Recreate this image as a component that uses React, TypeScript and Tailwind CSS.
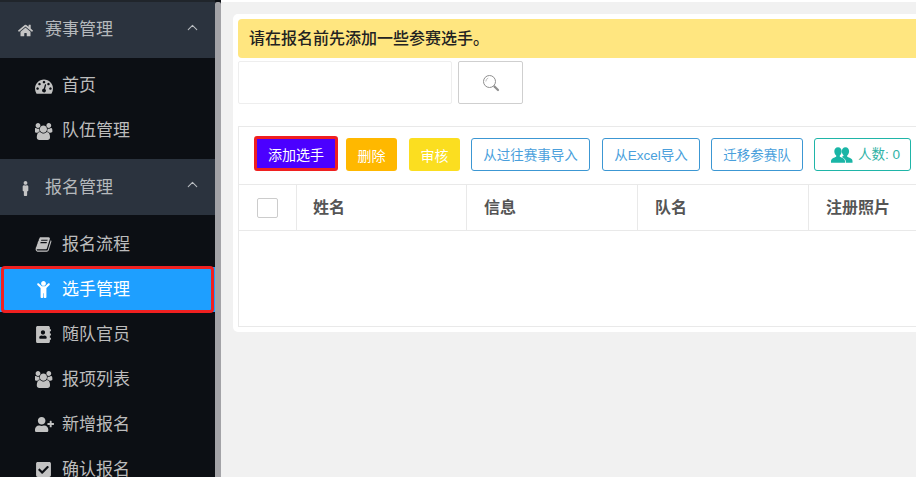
import React from "react";
import { FaHome, FaMale, FaAddressBook, FaUserPlus, FaCheckSquare, FaChild } from "react-icons/fa";
import { LuChevronUp } from "react-icons/lu";

const font = { fontFamily: '"Liberation Sans", "Noto Sans CJK SC", sans-serif' };

const UsersIcon = () => (
  <svg width="18" height="17" viewBox="0 0 1920 1792" fill="currentColor">
    <path d="M529 896q-162 5-265 128h-134q-82 0-138-40.5t-56-118.5q0-353 124-353 6 0 43.5 21t97.5 42.5 119 21.5q67 0 133-23-5 37-5 66 0 139 81 256zm1071 637q0 120-73 189.5t-194 69.5h-874q-121 0-194-69.5t-73-189.5q0-53 3.5-103.5t14-109 26.5-108.5 43-97.5 62-81 85.5-53.5 111.5-20q10 0 43 21.5t73 48 107 48 135 21.5 135-21.5 107-48 73-48 43-21.5q61 0 111.5 20t85.5 53.5 62 81 43 97.5 26.5 108.5 14 109 3.5 103.5zm-1024-1277q0 106-75 181t-181 75-181-75-75-181 75-181 181-75 181 75 75 181zm704 384q0 159-112.5 271.5t-271.5 112.5-271.5-112.5-112.5-271.5 112.5-271.5 271.5-112.5 271.5 112.5 112.5 271.5zm576 225q0 78-56 118.5t-138 40.5h-134q-103-123-265-128 81-117 81-256 0-29-5-66 66 23 133 23 59 0 119-21.5t97.5-42.5 43.5-21q124 0 124 353zm-128-609q0 106-75 181t-181 75-181-75-75-181 75-181 181-75 181 75 75 181z" />
  </svg>
);

const BookIcon = () => (
  <svg width="17" height="17" viewBox="0 0 1792 1792" fill="currentColor">
    <path d="M1703 478q40 57 18 129l-275 906q-19 64-76.500 107.500t-122.500 43.500h-923q-77 0-148.500-53.500t-99.500-131.500q-24-67-2-127 0-4 3-27t4-37q1-8-3-21.500t-3-19.500q2-11 8-21t16.500-23.500 16.500-23.500q23-38 45-91.500t30-91.500q3-10 .5-30t-.5-28q3-11 17-28t17-23q21-36 42-92t25-90q1-9-2.500-32t.5-28q4-13 22-30.500t22-22.500q19-26 42.500-84.500t27.500-96.500q1-8-3-25.500t-2-26.500q2-8 9-18t18-23 17-21q8-12 16.500-30.500t15-35 16-36 19.500-32 26.500-23.500 36-11.500 47.500 5.500l-1 3q38-9 51-9h761q74 0 114 56t18 130l-274 906q-36 119-71.500 153.500t-128.500 34.500h-869q-27 0-38 15-11 16-1 43 24 70 144 70h923q29 0 56-15.500t35-41.500l300-987q7-22 5-57 38 15 59 43zm-1064 2q-4 13 2 22.500t20 9.500h608q13 0 25.500-9.500t16.500-22.500l21-64q4-13-2-22.500t-20-9.500h-608q-13 0-25.500 9.500t-16.500 22.500zm-83 256q-4 13 2 22.500t20 9.500h608q13 0 25.500-9.500t16.500-22.500l21-64q4-13-2-22.500t-20-9.500h-608q-13 0-25.500 9.500t-16.500 22.500z" />
  </svg>
);

const GaugeIcon = () => (
  <svg width="18" height="18" viewBox="0 0 1792 1792" fill="currentColor">
    <path d="M384 1152q0-53-37.500-90.500t-90.500-37.500-90.500 37.500-37.500 90.500 37.500 90.500 90.500 37.500 90.500-37.500 37.500-90.500zm192-448q0-53-37.500-90.500t-90.500-37.500-90.500 37.500-37.500 90.500 37.500 90.500 90.500 37.500 90.500-37.500 37.500-90.500zm428 481l101-382q6-26-7.500-48.500t-38.500-29.500-48 6.500-30 39.500l-101 382q-60 5-107 43.500t-63 98.500q-20 77 20 146t117 89 146-20 89-117q16-60-6-117t-72-91zm660-33q0-53-37.500-90.500t-90.500-37.500-90.500 37.500-37.500 90.500 37.500 90.500 90.500 37.500 90.500-37.500 37.500-90.500zm-640-640q0-53-37.500-90.500t-90.500-37.500-90.500 37.500-37.500 90.500 37.500 90.500 90.500 37.500 90.500-37.500 37.500-90.500zm448 192q0-53-37.500-90.500t-90.500-37.500-90.500 37.500-37.500 90.500 37.500 90.500 90.500 37.500 90.500-37.500 37.500-90.500zm320 448q0 261-141 483-19 29-54 29h-1402q-35 0-54-29-141-221-141-483 0-182 71-348t191-286 286-191 348-71 348 71 286 191 191 286 71 348z" />
  </svg>
);

const TwoUsers = () => (
  <svg width="22" height="18" viewBox="0 0 22 18" fill="#1ab5a6">
    <path d="M14.5 1.2c2.3 0 3.6 1.8 3.6 4 0 1.800-.8 3.400-1.900 4.300v1.300c1.700.8 5.300 1.700 5.300 4.200v1.800h-6.700v-1.500c0-2-1.700-3.200-3.900-4.400.7-.3 1.100-.6 1.600-.8V9.200c-1-.9-1.700-2.400-1.700-4 0-2.200 1.400-4 3.700-4z" />
    <path d="M7 1.200c2.300 0 3.700 1.800 3.700 4 0 1.800-.8 3.400-1.900 4.300v1.300c1.800.8 5.200 1.900 5.200 4.400v1.600H0v-1.600c0-2.500 3.500-3.600 5.200-4.400V9.500C4.100 8.600 3.300 7 3.300 5.200c0-2.200 1.400-4 3.700-4z" />
  </svg>
);

function Group({ icon, label, low }: { icon: React.ReactNode; label: string; low?: boolean }) {
  return (
    <div className="h-[56px] bg-[#2b333e] flex items-center pl-[18px] pr-[14px] text-[17px]">
      <span className={`w-[27px] flex text-[#c4c4c4] text-[15px] ${low ? "pt-[2px]" : ""}`}>{icon}</span>
      <span className={`flex-1 text-[#b5b9bc] ${low ? "pt-[2px]" : ""}`}>{label}</span>
      <LuChevronUp size={17} strokeWidth={1.5} className="text-[#b8bcc0] mb-[6px]" />
    </div>
  );
}

function Item({ icon, label, active, high }: { icon: React.ReactNode; label: string; active?: boolean; high?: boolean }) {
  const shift = high ? "pb-[1px]" : "";
  return (
    <div className={`relative h-[45px] flex items-center pl-[35px] text-[17px] ${active ? "bg-[#1e9fff] text-white" : "text-[#bcbcbc]"}`}>
      <span className={`w-[27px] flex text-[17px] ${shift} ${active ? "text-white" : "text-[#c2c2c2]"}`}>{icon}</span>
      <span className={shift}>{label}</span>
      {active && <div className="absolute left-[1px] right-[1px] top-[-1px] bottom-[-1px] border-[3px] border-[#f02020] rounded-[4px]" />}
    </div>
  );
}

function OutlineBtn({ w, children }: { w: string; children: React.ReactNode }) {
  return (
    <div className={`${w} h-[33px] shrink-0 border border-[#3c97d3] rounded-[3px] text-[#4a9fdc] text-[13.5px] pt-[3px] flex items-center justify-center`}>
      {children}
    </div>
  );
}

function Th({ children, w }: { children: React.ReactNode; w: string }) {
  return (
    <div className={`${w} shrink-0 h-full border-r border-[#e9e9e9] flex items-center text-[16px] font-bold text-[#555555]`}>
      {children}
    </div>
  );
}

export default function App() {
  return (
    <div className="w-[916px] h-[477px] overflow-hidden flex bg-[#f1f1f1]" style={font}>
      <aside className="w-[215px] shrink-0 h-full bg-[#0c0f14] overflow-hidden">
        <div className="h-[2px] bg-[#20252b]" />
        <Group icon={<FaHome />} label="赛事管理" />
        <div className="pt-[6px] pb-[5px]">
          <Item high icon={<GaugeIcon />} label="首页" />
          <Item high icon={<UsersIcon />} label="队伍管理" />
        </div>
        <Group low icon={<FaMale />} label="报名管理" />
        <div className="pt-[7px]">
          <Item icon={<BookIcon />} label="报名流程" />
          <Item icon={<FaChild />} label="选手管理" active />
          <Item icon={<FaAddressBook />} label="随队官员" />
          <Item icon={<UsersIcon />} label="报项列表" />
          <Item icon={<FaUserPlus className="text-[19px]" />} label="新增报名" />
          <Item icon={<FaCheckSquare />} label="确认报名" />
        </div>
      </aside>
      <div className="w-[6px] shrink-0 h-full pt-[2px] bg-[#0c0f14]">
        <div className="h-full bg-[#a3a3a7] rounded-t-[2px]" />
      </div>
      <main className="flex-1 min-w-0 h-full overflow-hidden">
        <div className="h-[2px] bg-white" />
        <div className="mt-[12px] ml-[12px] w-[740px] h-[318px] bg-white rounded-[5px] p-[5px]">
          <div className="h-[39px] bg-[#ffe680] rounded-l-[4px] flex items-center pl-[11px] text-[16px] font-medium text-[#222222]">
            请在报名前先添加一些参赛选手。
          </div>
          <div className="mt-[3px] flex gap-[6px]">
            <div className="w-[214px] h-[43px] border border-[#eeeeee] rounded-[2px]" />
            <div className="w-[65px] h-[43px] border border-[#cfcfcf] rounded-[2px] flex items-center justify-center">
              <svg width="18" height="18" viewBox="0 0 18 18" fill="none">
                <circle cx="7.5" cy="7.5" r="6" stroke="#8f8f8f" strokeWidth="1" />
                <path d="M3.8 7.5a3.700 3.700 0 0 1 2.400-3.400" stroke="#bdbdbd" strokeWidth="1" />
                <path d="M12.500 12.500l3.500 3.500" stroke="#8f8f8f" strokeWidth="2.2" strokeLinecap="round" />
              </svg>
            </div>
          </div>
          <div className="mt-[22px] h-[201px] border border-[#e9e9e9] border-r-0">
            <div className="h-[58px] flex items-start pl-[15px] pt-[10px] border-b border-[#e9e9e9]">
              <div className="w-[84px] h-[35px] mt-[-1px] pt-[3px] shrink-0 bg-[#4b00ff] border-[3px] border-[#f02020] rounded-[3px] text-white text-[14px] flex items-center justify-center">
                添加选手
              </div>
              <div className="ml-[8px] mt-[1px] pt-[3px] w-[51px] h-[33px] shrink-0 bg-[#ffb800] rounded-[3px] text-white text-[14px] flex items-center justify-center">删除</div>
              <div className="ml-[12px] mt-[1px] pt-[3px] w-[51px] h-[33px] shrink-0 bg-[#fbde20] rounded-[3px] text-white text-[14px] flex items-center justify-center">审核</div>
              <div className="ml-[11px] mt-[1px] flex">
                <OutlineBtn w="w-[119px]">从过往赛事导入</OutlineBtn>
                <div className="w-[12px] shrink-0" />
                <OutlineBtn w="w-[98px]">从Excel导入</OutlineBtn>
                <div className="w-[11px] shrink-0" />
                <OutlineBtn w="w-[92px]">迁移参赛队</OutlineBtn>
                <div className="w-[11px] shrink-0" />
                <div className="w-[97px] h-[33px] shrink-0 border border-[#1fb5a8] rounded-[3px] text-[#2fb3a6] text-[13.5px] flex items-center pl-[16px] gap-[5px]">
                  <TwoUsers />
                  <span className="pt-[2px]">人数: 0</span>
                </div>
              </div>
            </div>
            <div className="h-[46px] flex border-b border-[#e9e9e9]">
              <div className="w-[58px] shrink-0 h-full border-r border-[#e9e9e9] flex items-center pl-[18px]">
                <div className="w-[21px] h-[20px] border border-[#cccccc] rounded-[2px]" />
              </div>
              <Th w="w-[170px] pl-[16px]">姓名</Th>
              <Th w="w-[171px] pl-[17px]">信息</Th>
              <Th w="w-[171px] pl-[17px]">队名</Th>
              <Th w="w-[171px] pl-[17px]">注册照片</Th>
            </div>
          </div>
        </div>
      </main>
    </div>
  );
}
